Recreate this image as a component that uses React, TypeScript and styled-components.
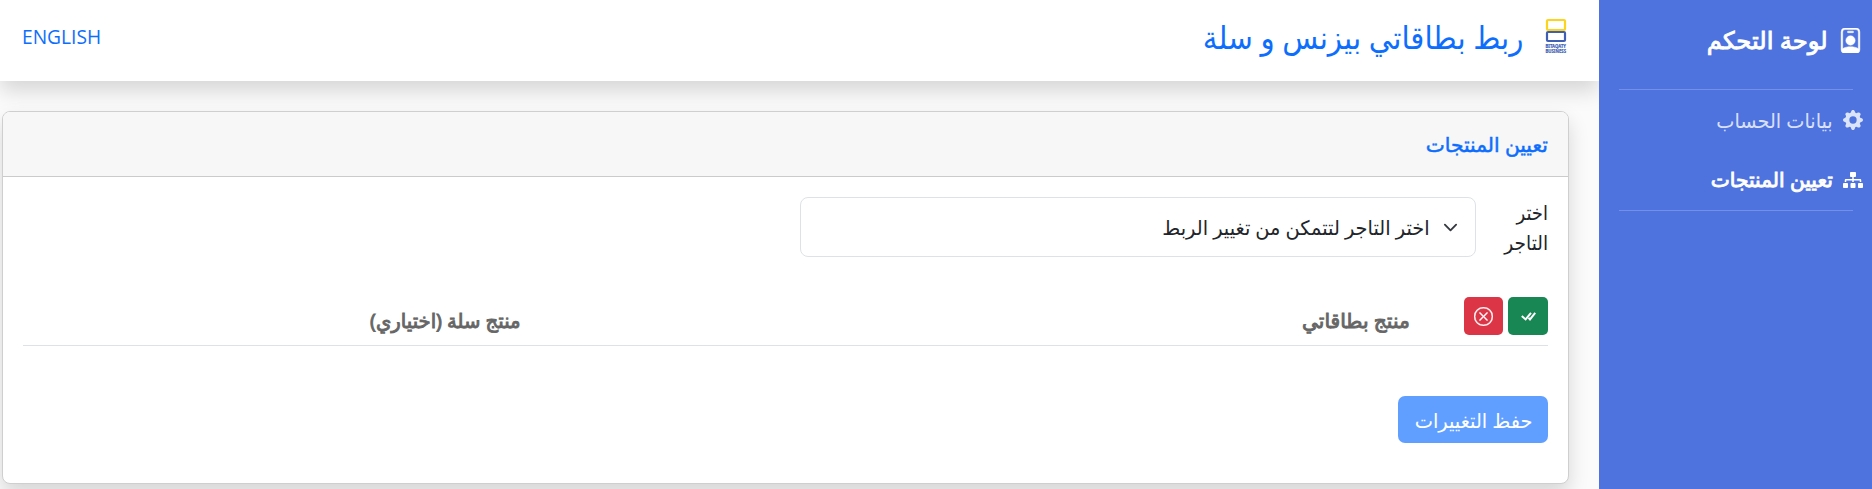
import React from "react";
import styled, { createGlobalStyle } from "styled-components";
import { BsPersonBadge, BsGearFill, BsXCircle } from "react-icons/bs";
import { FaSitemap } from "react-icons/fa";

const Global = createGlobalStyle`
  *, *::before, *::after { box-sizing: border-box; }
  html, body { margin: 0; height: 100%; overflow: hidden; }
  body {
    font-family: "Noto Sans", "Open Sans", "DejaVu Sans", sans-serif;
    font-size: 20px;
    line-height: 30px;
    color: #212529;
    background: #fbfbfb;
  }
  button { font-family: inherit; }
`;

const Page = styled.div`
  display: flex;
  height: 489px;
  overflow: hidden;
`;

const Label = styled.span<{ $size: number; $stretch?: number; $weight?: number; $drop?: number }>`
  display: inline-block;
  white-space: nowrap;
  font-size: ${(p) => p.$size}px;
  -webkit-text-stroke: ${(p) => p.$weight ?? 0}px currentColor;
  transform: translateY(${(p) => p.$drop ?? 0}px) scaleX(${(p) => p.$stretch ?? 1});
  transform-origin: right center;
`;

const Sidebar = styled.nav`
  flex: none;
  width: 273px;
  background: #4e73df;
  color: #fff;
  position: relative;
  z-index: 1;
`;

const Brand = styled.div`
  display: flex;
  align-items: center;
  gap: 10px;
  height: 89px;
  padding: 0 9px 8px 0;
`;

const BadgeIcon = styled(BsPersonBadge)`
  flex: none;
  stroke: currentColor;
  stroke-width: 0.3px;
`;

const Divider = styled.hr`
  height: 1px;
  margin: 0 19px 0 20px;
  border: 0;
  background: #7390e6;
`;

const NavItem = styled.a<{ $active?: boolean }>`
  display: flex;
  align-items: center;
  gap: 10px;
  height: 60px;
  padding-right: 9px;
  color: ${(p) => (p.$active ? "#fff" : "rgba(255,255,255,.8)")};
`;

const Main = styled.main`
  flex: 1;
  min-width: 0;
`;

const Header = styled.header`
  display: flex;
  align-items: center;
  height: 81px;
  padding: 0 32px 0 22px;
  background: #fff;
  box-shadow: 0 10px 20px rgba(0, 0, 0, 0.15);
  color: #0d6efd;
`;

const Logo = styled.svg`
  flex: none;
  width: 22px;
  height: 36px;
  margin: 0 0 9px 22px;
  overflow: visible;
`;

const LogoText = styled.text`
  direction: ltr;
  font-size: 4.8px;
  font-weight: 700;
  fill: #3f5fb5;
  stroke: #3f5fb5;
  stroke-width: 0.2px;
`;

const Language = styled.a`
  margin: 0 auto 7px 0;
  font-family: "Open Sans", sans-serif;
  font-size: 19.2px;
  direction: ltr;
`;

const Card = styled.section`
  margin: 30px 30px 0 2px;
  height: 373px;
  border: 1px solid #cfcfcf;
  border-radius: 8px;
  background: #fff;
  box-shadow: 0 10px 20px rgba(0, 0, 0, 0.15);
`;

const CardHeader = styled.div`
  display: flex;
  align-items: center;
  height: 65px;
  padding-right: 20px;
  background: #f7f7f7;
  border-bottom: 1px solid #cbcbcb;
  border-radius: 7px 7px 0 0;
  color: #0d6efd;
`;

const CardBody = styled.div`
  padding: 20px 20px 0;
`;

const Field = styled.div`
  display: flex;
`;

const FieldLabel = styled.label`
  display: flex;
  flex-direction: column;
  align-items: flex-start;
  width: 72px;
`;

const Select = styled.div`
  display: flex;
  align-items: center;
  gap: 13px;
  width: 676px;
  height: 60px;
  padding-right: 17px;
  border: 1px solid #dee2e6;
  border-radius: 8px;
`;

const TableHead = styled.div`
  display: grid;
  grid-template-columns: 138px 889px 1fr;
  height: 49px;
  margin-top: 40px;
  border-bottom: 1px solid #dee2e6;
  color: #666;
`;

const Actions = styled.div`
  display: flex;
  gap: 5px;
`;

const IconButton = styled.button<{ $color: string; $width: number }>`
  display: flex;
  align-items: center;
  justify-content: center;
  width: ${(p) => p.$width}px;
  height: 38px;
  padding: 0;
  border: 0;
  border-radius: 5px;
  background: ${(p) => p.$color};
  color: #fff;
`;

const CancelIcon = styled(BsXCircle)`
  stroke: currentColor;
  stroke-width: 0.3px;
`;

const HeadCell = styled.div`
  padding-top: 9px;
`;

const SaveButton = styled.button`
  display: flex;
  align-items: center;
  width: 150px;
  height: 47px;
  margin-top: 50px;
  padding: 0 16px 0 0;
  border: 0;
  border-radius: 7px;
  background: #609fff;
  color: #fff;
`;

export default function App() {
  return (
    <Page dir="rtl">
      <Global />
      <Sidebar>
        <Brand>
          <BadgeIcon size={25} />
          <Label $size={24} $weight={0.9} $stretch={1.01} $drop={-1}>لوحة التحكم</Label>
        </Brand>
        <Divider />
        <NavItem>
          <BsGearFill size={20} />
          <Label $size={20} $stretch={0.965} $drop={1}>بيانات الحساب</Label>
        </NavItem>
        <NavItem $active>
          <FaSitemap size={20} />
          <Label $size={20} $weight={0.9} $stretch={1.01}>تعيين المنتجات</Label>
        </NavItem>
        <Divider />
      </Sidebar>
      <Main>
        <Header>
          <Logo viewBox="0 0 22 36">
            <rect x="2" y="2" width="18" height="10" rx="1" fill="none" stroke="#fdd41c" strokeWidth="2.2" />
            <rect x="2" y="14" width="18" height="9" rx="1" fill="none" stroke="#3f5fb5" strokeWidth="2.2" />
            <LogoText x="0.5" y="30" textLength="20.5" lengthAdjust="spacingAndGlyphs">BITAQATY</LogoText>
            <LogoText x="0.5" y="34.8" textLength="20.5" lengthAdjust="spacingAndGlyphs">BUSINESS</LogoText>
          </Logo>
          <Label $size={32} $stretch={0.918} $drop={-4}>ربط بطاقاتي بيزنس و سلة</Label>
          <Language>ENGLISH</Language>
        </Header>
        <Card>
          <CardHeader>
            <Label $size={20} $weight={0.5} $stretch={1.01} $drop={1}>تعيين المنتجات</Label>
          </CardHeader>
          <CardBody>
            <Field>
              <FieldLabel>
                <Label $size={20} $stretch={0.9} $drop={1}>اختر</Label>
                <Label $size={20} $stretch={0.93} $drop={1}>التاجر</Label>
              </FieldLabel>
              <Select>
                <svg width="15" height="15" viewBox="0 0 16 16" fill="none" stroke="#343a40" strokeWidth="2" strokeLinecap="round" strokeLinejoin="round">
                  <path d="m2 5 6 6 6-6" />
                </svg>
                <Label $size={20} $stretch={0.97} $drop={1}>اختر التاجر لتتمكن من تغيير الربط</Label>
              </Select>
            </Field>
            <TableHead>
              <Actions>
                <IconButton $color="#198754" $width={40}>
                  <svg width="16" height="16" viewBox="0 0 16 16" fill="none" stroke="#fff" strokeWidth="2">
                    <path d="m1.8 8 3.8 3.4L11 4.8M8.6 9.8l1.4 1.6 5.2-6.6" />
                  </svg>
                </IconButton>
                <IconButton $color="#dc3545" $width={39}>
                  <CancelIcon size={19} />
                </IconButton>
              </Actions>
              <HeadCell><Label $size={20} $weight={0.9} $stretch={1.01}>منتج بطاقاتي</Label></HeadCell>
              <HeadCell><Label $size={20} $weight={0.9} $stretch={0.98}>منتج سلة (اختياري)</Label></HeadCell>
            </TableHead>
            <SaveButton>
              <Label $size={20} $stretch={0.97} $drop={1}>حفظ التغييرات</Label>
            </SaveButton>
          </CardBody>
        </Card>
      </Main>
    </Page>
  );
}
